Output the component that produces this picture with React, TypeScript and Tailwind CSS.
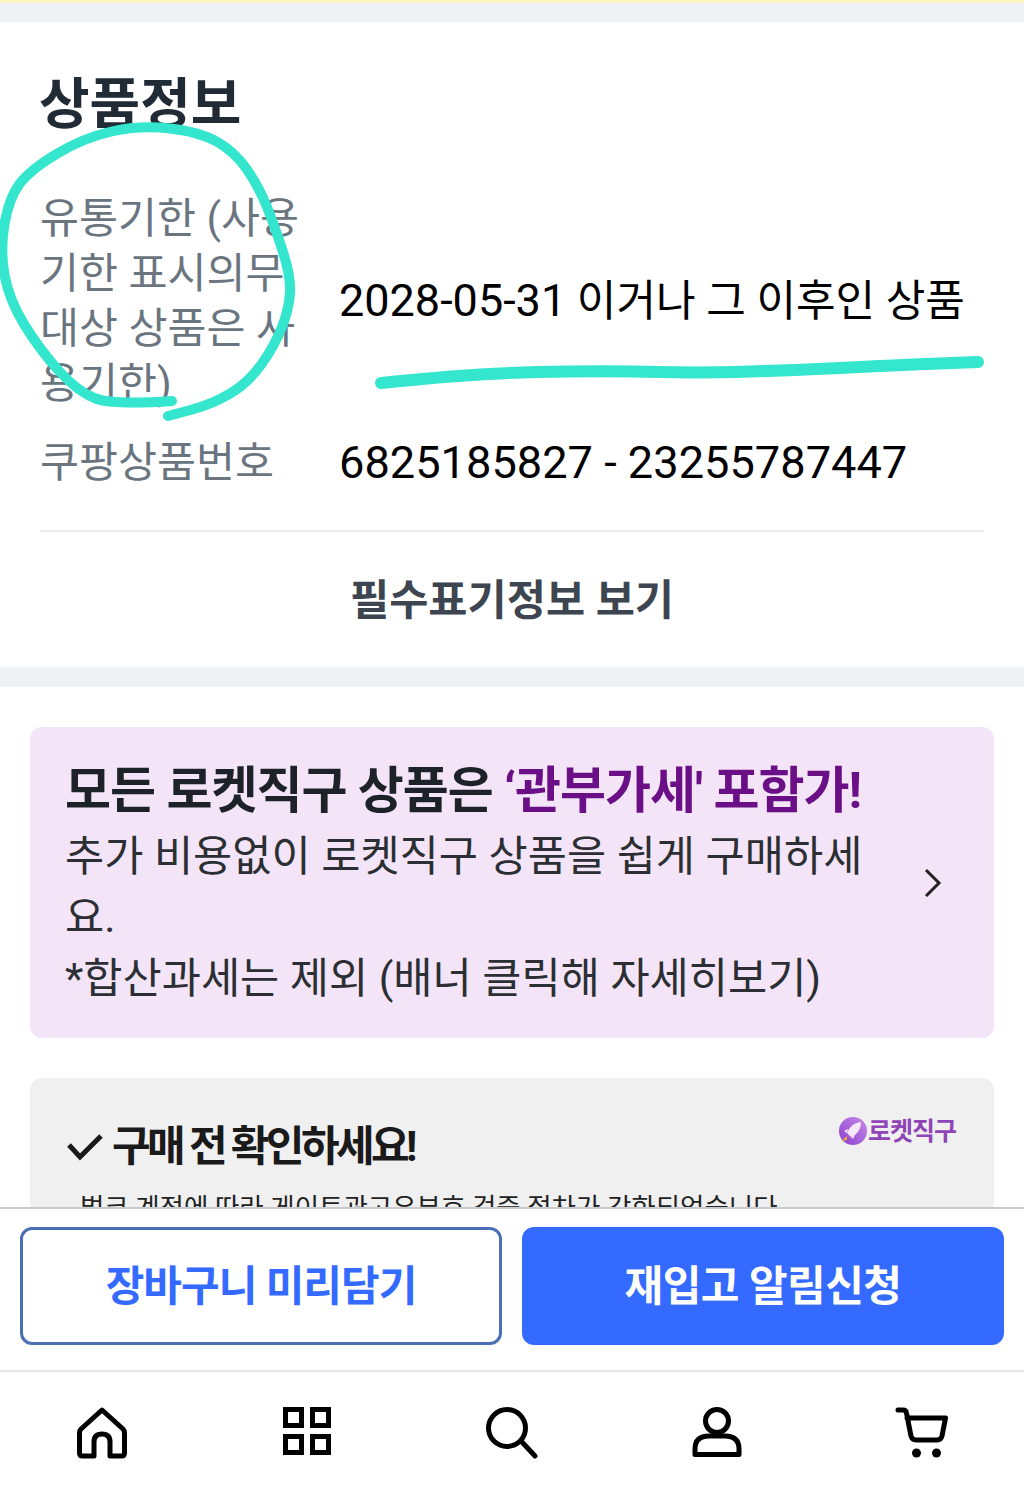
const font = { fontFamily: 'Roboto, "Noto Sans CJK KR", sans-serif' };

// pen strokes traced from the screenshot
const circlePoints: [number, number][] = [
  [172, 401], [113, 405], [78, 392], [40, 350], [9, 300], [0, 250], [9, 198], [30, 170], [83, 138], [140, 125],
  [200, 132], [235, 152], [259, 187], [275, 227], [291, 277], [289, 309], [275, 345], [249, 382], [213, 404], [168, 416],
];
const linePoints: [number, number][] = [
  [381, 383], [440, 377], [520, 372], [620, 371], [700, 373], [800, 370], [900, 365], [978, 362],
];

function smoothPath(points: [number, number][]) {
  let d = `M${points[0][0]} ${points[0][1]}`;
  for (let i = 1; i < points.length - 1; i++) {
    const mx = (points[i][0] + points[i + 1][0]) / 2;
    const my = (points[i][1] + points[i + 1][1]) / 2;
    d += ` Q${points[i][0]} ${points[i][1]} ${mx} ${my}`;
  }
  const last = points[points.length - 1];
  return `${d} L${last[0]} ${last[1]}`;
}

function HomeIcon() {
  return (
    <svg width="50" height="52" viewBox="0 0 50 52" fill="none" stroke="#000" strokeWidth="5" strokeLinejoin="round">
      <path d="M25 3 L46 22 Q47.500 23.500 47.500 26 V46 Q47.500 49 44.500 49 H33 V35 Q33 27 25 27 Q17 27 17 35 V49 H5.500 Q2.500 49 2.500 46 V26 Q2.500 23.500 4 22 Z" />
    </svg>
  );
}

function GridIcon() {
  return (
    <svg width="48" height="48" viewBox="0 0 48 48" fill="none" stroke="#000" strokeWidth="5">
      <rect x="2.500" y="2.500" width="16" height="16" />
      <rect x="29.500" y="2.500" width="16" height="16" />
      <rect x="2.500" y="29.500" width="16" height="16" />
      <rect x="29.500" y="29.500" width="16" height="16" />
    </svg>
  );
}

function SearchIcon() {
  return (
    <svg width="52" height="52" viewBox="0 0 52 52" fill="none" stroke="#000" strokeWidth="5" strokeLinecap="round">
      <circle cx="21" cy="21" r="18.500" />
      <path d="M35 34 L49 49" />
    </svg>
  );
}

function UserIcon() {
  return (
    <svg width="50" height="50" viewBox="0 0 50 50" fill="none" stroke="#000" strokeWidth="5" strokeLinejoin="round">
      <circle cx="25" cy="14" r="11.500" />
      <path d="M3 47.500 V42 Q3 29 17 29 H33 Q47 29 47 42 V47.500 Z" />
    </svg>
  );
}

function CartIcon() {
  return (
    <svg width="54" height="52" viewBox="0 0 54 52" fill="none" stroke="#000" strokeWidth="5" strokeLinecap="round" strokeLinejoin="round">
      <path d="M3 3 H8 Q11 3 11.500 6 L16 29 Q17 33 21 33 H42 Q46 33 47 29 L50.500 11 H12" />
      <circle cx="21.500" cy="46" r="4.500" fill="#000" stroke="none" />
      <circle cx="41.500" cy="46" r="4.500" fill="#000" stroke="none" />
    </svg>
  );
}

function RocketBadge() {
  return (
    <svg width="32" height="32" viewBox="0 0 32 32">
      <defs>
        <linearGradient id="badge" x1="0" y1="1" x2="1" y2="0">
          <stop offset="0" stopColor="#8b3fd0" />
          <stop offset="1" stopColor="#c98ae8" />
        </linearGradient>
      </defs>
      <circle cx="17" cy="15" r="14" fill="url(#badge)" />
      <path d="M25 6 Q17 7 13 13 L11 17 L15 21 L19 19 Q25 14 25 6 Z" fill="#f6e9fb" />
      <path d="M12 13 L8 15 L11 17 Z M19 19 L17 23 L15 21 Z" fill="#f6e9fb" />
      <path d="M11 20 L5 25 L11 24 Z" fill="#f5a540" />
    </svg>
  );
}

export default function App() {
  const navIcons = [<HomeIcon key="home" />, <GridIcon key="grid" />, <SearchIcon key="search" />, <UserIcon key="user" />, <CartIcon key="cart" />];

  return (
    <div className="relative w-[1024px] h-[1500px] overflow-hidden bg-white flex flex-col" style={font}>
      <div className="h-[3px] bg-[#fdf5c4]" />
      <div className="h-[19px] bg-[#eef2f5]" />

      <div className="flex-1 min-h-0 overflow-hidden">
        <section className="h-[645px] px-10 pt-[50px]">
          <h2 className="-ml-px text-[55px] leading-[64px] font-bold text-[#212b36]">상품정보</h2>
          <div className="flex items-center mt-[55px]">
            <div className="w-[264px] mr-[35px] shrink-0 text-[42.4px] leading-[55px] text-[#6a7580] break-all">
              유통기한 (사용 기한 표시의무 대상 상품은 사용기한)
            </div>
            <div className="text-[43px] leading-[55px] text-black">
              <span className="text-[45px]">2028-05-31</span> 이거나 그 이후인 상품
            </div>
          </div>
          <div className="flex items-center mt-[24px] pb-[40px] border-b-2 border-[#e8eaec]">
            <div className="w-[264px] mr-[35px] shrink-0 text-[42.4px] leading-[55px] text-[#6a7580]">쿠팡상품번호</div>
            <div className="text-[45.2px] leading-[55px] text-black">6825185827 - 23255787447</div>
          </div>
          <div className="text-center mt-[38px] text-[42.6px] leading-[60px] font-bold text-[#3d4650]">필수표기정보 보기</div>
        </section>

        <div className="h-5 bg-[#eef2f5]" />

        <div className="px-[30px] pt-10 flex flex-col gap-10">
          <div className="h-[311px] rounded-xl bg-[#f3e5f7] pl-[35px] pr-[51px] pt-[32px] flex items-center">
            <div className="w-[810px] shrink-0 -mt-[28px]">
              <div className="text-[50px] leading-[62px] font-bold tracking-[-1px] text-[#1c2228]">
                모든 로켓직구 상품은 <span className="text-[#6b0f86]">‘관부가세' 포함가!</span>
              </div>
              <div className="mt-1 text-[42.6px] leading-[61px] text-[#2b2f33]">
                추가 비용없이 로켓직구 상품을 쉽게 구매하세요.
                <br />
                *합산과세는 제외 (배너 클릭해 자세히보기)
              </div>
            </div>
            <svg className="ml-auto -mt-[32px]" width="20" height="32" viewBox="0 0 20 32" fill="none" stroke="#222" strokeWidth="3">
              <path d="M3 3 L16 16 L3 29" />
            </svg>
          </div>

          <div className="h-[200px] rounded-xl bg-[#f0f0f0] pl-[36px] pr-[38px] pt-[39px]">
            <div className="flex items-start justify-between">
              <div className="flex items-center gap-[8px]">
                <svg width="38" height="28" viewBox="0 0 38 28" fill="none" stroke="#1a1a1a" strokeWidth="5">
                  <path d="M3 12 L14 24 L35 3" />
                </svg>
                <span className="text-[42px] leading-[60px] font-bold tracking-[-3.6px] text-[#1a1a1a]">구매 전 확인하세요!</span>
              </div>
              <div className="flex items-center -mt-[3px]">
                <RocketBadge />
                <span className="text-[25px] leading-[36px] font-bold tracking-[-1px] text-[#8f45b8]">로켓직구</span>
              </div>
            </div>
            <div className="mt-[11px] text-[26.5px] leading-[40px] text-[#222] whitespace-nowrap">- 벌크 계정에 따라 게이트관고유부호 검증 절차가 강화되었습니다</div>
          </div>
        </div>
      </div>

      <div className="h-[163px] shrink-0 border-t-2 border-[#c6cbd0] bg-white px-5 pt-[18px] flex justify-between items-start">
        <button className="w-[482px] h-[118px] rounded-xl border-[3px] border-[#4a6fb5] text-[42px] font-bold tracking-[-1px] text-[#346aff]">
          장바구니 미리담기
        </button>
        <button className="w-[482px] h-[118px] rounded-xl bg-[#346aff] text-[42px] font-bold tracking-[-0.5px] text-white">
          재입고 알림신청
        </button>
      </div>

      <nav className="h-[130px] shrink-0 border-t-2 border-[#e6e6e6] bg-white pt-[35px] grid grid-cols-5 justify-items-center items-start">
        {navIcons}
      </nav>

      {/* pen scribbles on top of the screenshot */}
      <svg className="absolute left-0 top-0 pointer-events-none" width="1024" height="1500" viewBox="0 0 1024 1500" fill="none" stroke="#33e6cd" strokeLinecap="round" strokeLinejoin="round">
        <path strokeWidth="10" d={smoothPath(circlePoints)} />
        <path strokeWidth="12" d={smoothPath(linePoints)} />
      </svg>
    </div>
  );
}
